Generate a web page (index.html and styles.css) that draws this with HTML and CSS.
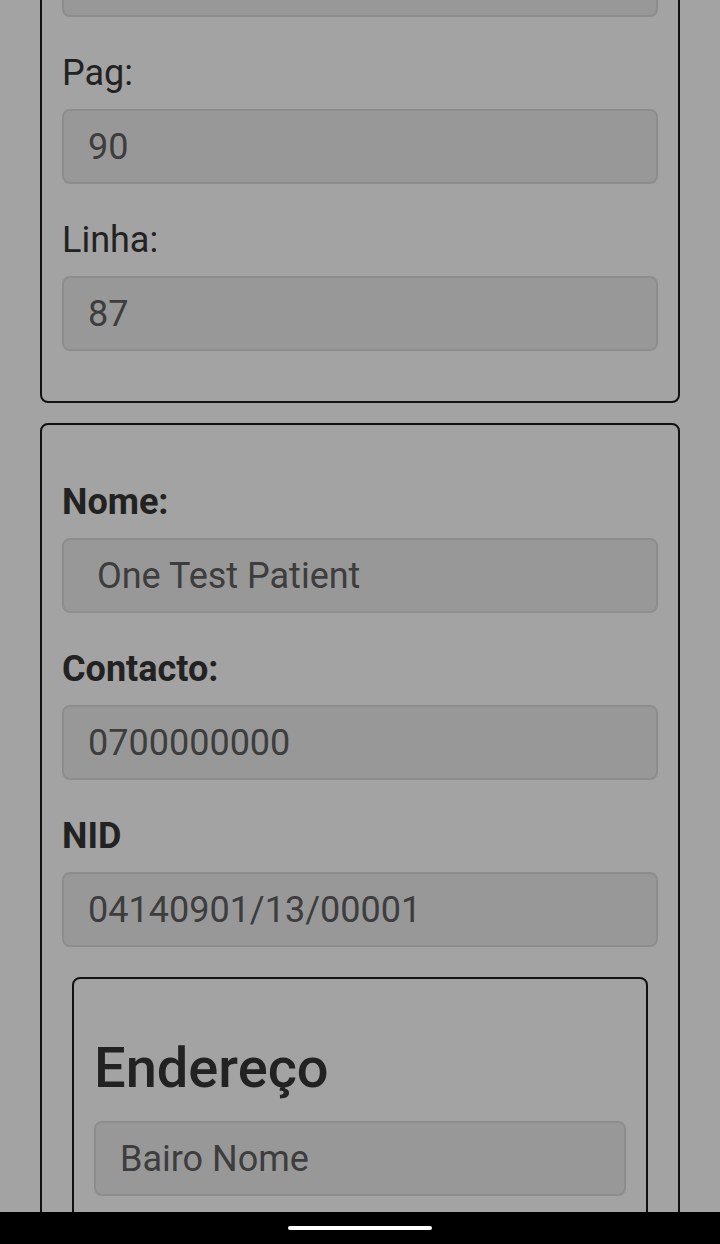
FILE: index.html
```html
<!DOCTYPE html>
<html lang="pt">
<head>
    <meta charset="UTF-8">
    <meta name="viewport" content="width=device-width, initial-scale=1.0">
    <title>Paciente</title>
    <link rel="stylesheet" href="styles.css">
</head>
<body>
    <div class="page">
        <div class="card">
            <div class="field">
                <label>Livro:</label>
                <input type="text" value="" readonly>
            </div>
            <div class="field">
                <label>Pag:</label>
                <input type="text" value="90" readonly>
            </div>
            <div class="field">
                <label>Linha:</label>
                <input type="text" value="87" readonly>
            </div>
        </div>

        <div class="card card-patient">
            <div class="field">
                <label class="bold">Nome:</label>
                <input type="text" value=" One Test Patient" readonly>
            </div>
            <div class="field">
                <label class="bold">Contacto:</label>
                <input type="text" value="0700000000" readonly>
            </div>
            <div class="field">
                <label class="bold">NID</label>
                <input type="text" value="04140901/13/00001" readonly>
            </div>

            <!-- Endereço -->
            <div class="card card-inner">
                <h2>Endereço</h2>
                <div class="field">
                    <input type="text" value="Bairo Nome" readonly>
                </div>
                <div class="field">
                    <input type="text" value="Rua" readonly>
                </div>
            </div>
        </div>
    </div>

    <div class="nav-bar">
        <span class="nav-pill"></span>
    </div>
</body>
</html>
```

FILE: styles.css
```css
body {
    font-family: 'Roboto', 'Noto Sans', sans-serif;
    margin: 0;
    background-color: #a3a3a3;
    color: #222222;
}

.page {
    margin-top: -171px;
    padding: 0 40px;
}

.card {
    border: 2px solid #111111;
    border-radius: 8px;
    padding: 49px 20px 20px;
    margin-bottom: 20px;
}

.card-patient {
    padding-top: 51px;
}

.card-inner {
    margin: 0 10px;
    padding: 56px 20px 20px;
}

.field {
    margin-bottom: 30px;
}

label {
    display: block;
    font-size: 36px;
    line-height: 52px;
    margin-bottom: 10px;
}

label.bold {
    font-weight: bold;
}

input {
    display: block;
    width: 100%;
    height: 75px;
    box-sizing: border-box;
    padding: 0 24px;
    font-family: inherit;
    font-size: 36px;
    color: #3d3d3d;
    background-color: #989898;
    border: 2px solid #8d8d8d;
    border-radius: 8px;
    outline: none;
}

h2 {
    font-size: 56px;
    font-weight: 500;
    line-height: 67px;
    margin: 0 0 19px;
}

.nav-bar {
    position: fixed;
    left: 0;
    right: 0;
    bottom: 0;
    height: 32px;
    background-color: #000000;
    display: flex;
    justify-content: center;
    align-items: center;
}

.nav-pill {
    width: 144px;
    height: 4px;
    border-radius: 2px;
    background-color: #ffffff;
}
```
